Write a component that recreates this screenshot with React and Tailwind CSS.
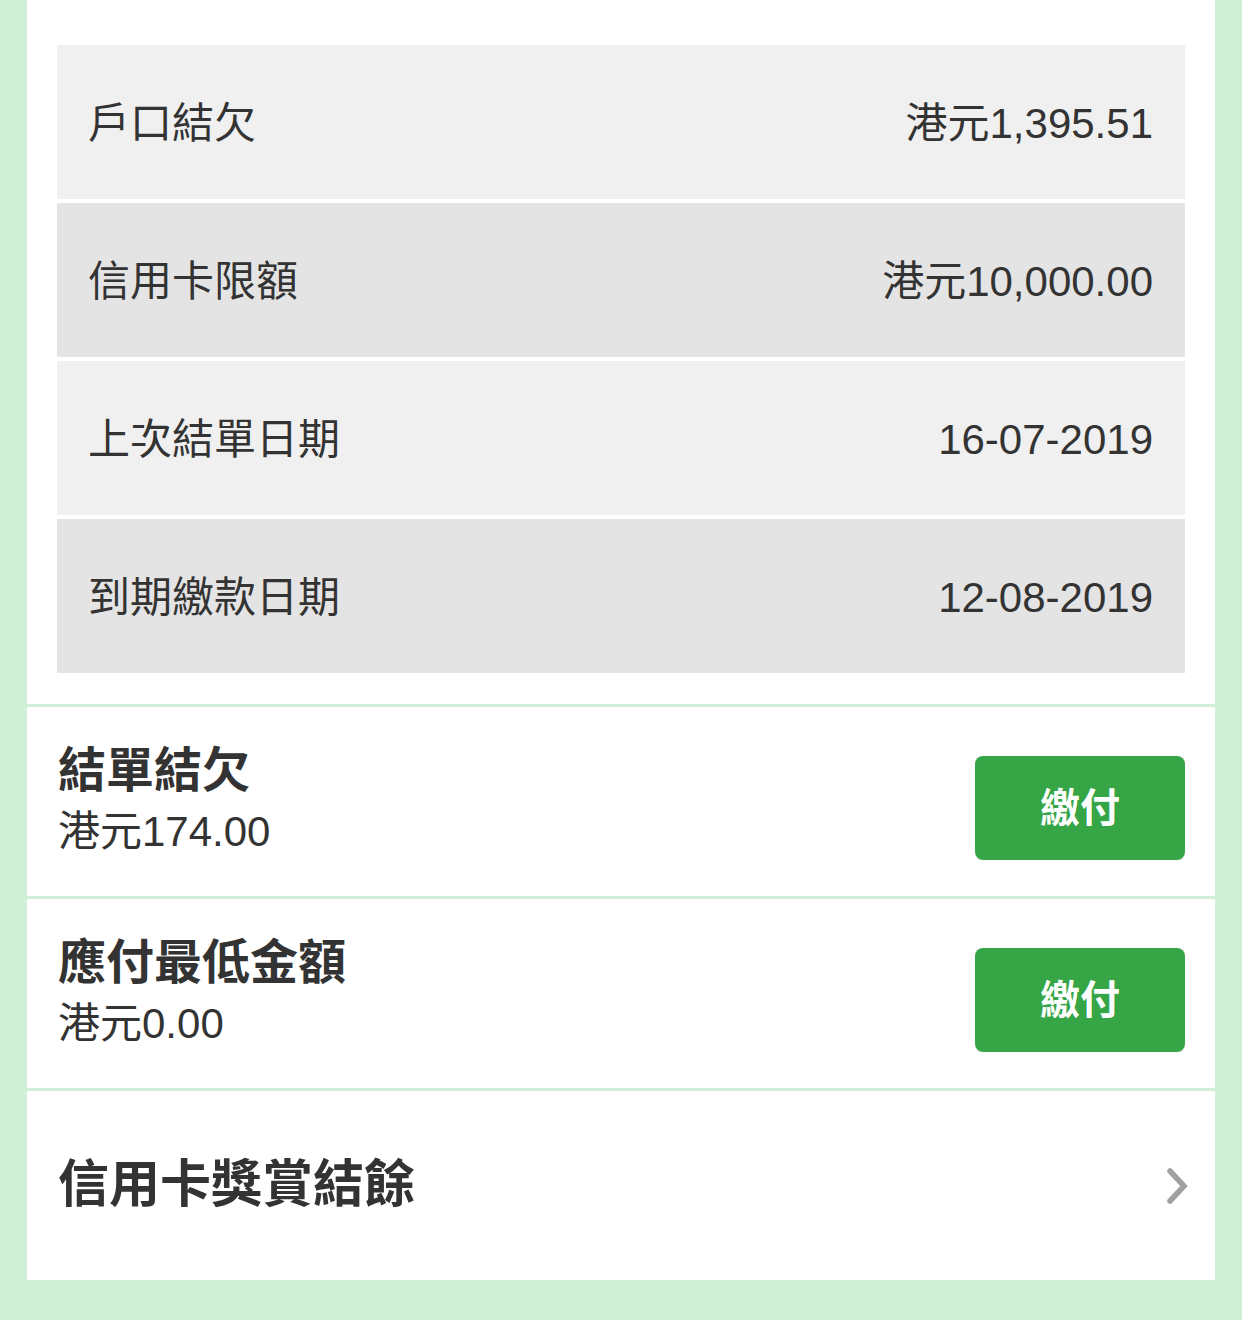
import React from 'react';

const font = { fontFamily: '"Liberation Sans", "Noto Sans CJK TC", sans-serif' };

const rows = [
    { label: '戶口結欠', value: '港元1,395.51', bg: 'bg-[#f0f0f0]' },
    { label: '信用卡限額', value: '港元10,000.00', bg: 'bg-[#e4e4e4]' },
    { label: '上次結單日期', value: '16-07-2019', bg: 'bg-[#f0f0f0]' },
    { label: '到期繳款日期', value: '12-08-2019', bg: 'bg-[#e4e4e4]' },
];

const dues = [
    { title: '結單結欠', amount: '港元174.00' },
    { title: '應付最低金額', amount: '港元0.00' },
];

const Chevron = () => (
    <svg width="26" height="38" viewBox="0 0 26 38" fill="none">
        <polyline points="5,4 19,19 5,34" stroke="#a0a0a0" strokeWidth="5.5" strokeLinecap="round" strokeLinejoin="miter" />
    </svg>
);

export default function App() {
    return (
        <div className="min-h-[1320px] w-[1242px] bg-[#d1efd7] px-[27px] text-[#333333]" style={font}>
            <div className="bg-white">
                {/* account summary */}
                <div className="px-[30px] pt-[45px] pb-[31px]">
                    <div className="flex flex-col gap-[4px]">
                        {rows.map((r) => (
                            <div key={r.label} className={`${r.bg} h-[154px] flex items-center justify-between pl-[31px] pr-[32px] pt-[3px] text-[42px]`}>
                                <span>{r.label}</span>
                                <span>{r.value}</span>
                            </div>
                        ))}
                    </div>
                </div>

                {dues.map((d) => (
                    <div key={d.title} className="border-t-[3px] border-[#d1efd7] h-[192px] flex items-center justify-between pl-[31px] pr-[30px]">
                        <div className="flex flex-col">
                            <span className="text-[48px] font-bold leading-[58px]">{d.title}</span>
                            <span className="text-[42px] leading-[58px] mt-[3px]">{d.amount}</span>
                        </div>
                        <button className="mt-[13px] w-[210px] h-[104px] rounded-[8px] bg-[#35a546] text-white text-[40px] font-bold">
                            繳付
                        </button>
                    </div>
                ))}

                <div className="border-t-[3px] border-[#d1efd7] h-[192px] flex items-center justify-between pl-[31px] pr-[24px]">
                    <span className="text-[51px] font-bold">信用卡獎賞結餘</span>
                    <Chevron />
                </div>
            </div>
        </div>
    );
}
